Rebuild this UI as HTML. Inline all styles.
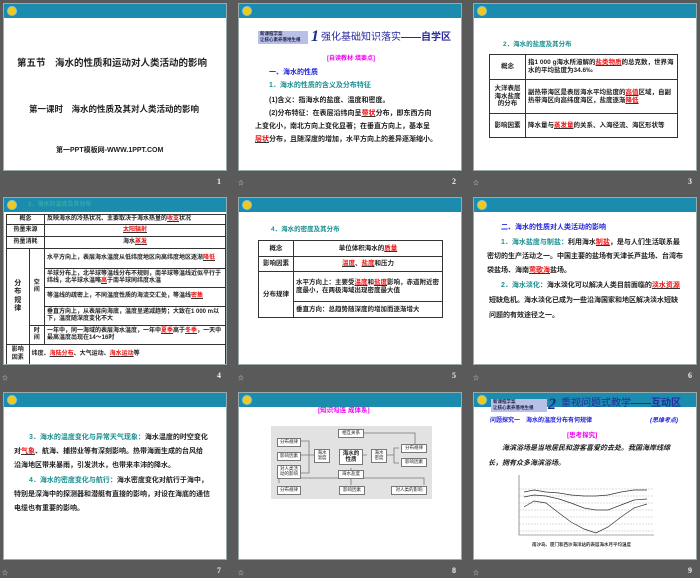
<!DOCTYPE html><html><head><meta charset="utf-8"><style>
*{margin:0;padding:0;box-sizing:border-box}
body{width:700px;height:578px;background:#5a5a5a;position:relative;overflow:hidden;font-family:"Liberation Sans","Noto Sans CJK SC",sans-serif;font-weight:bold;color:#222}
.s{position:absolute;width:224px;height:168px;background:#fff;border:1px solid #9aa;overflow:hidden}
.h{position:absolute;left:0;top:0;width:100%;height:14px;background:#1b8cae}
.sun{position:absolute;left:3px;top:2px;width:10px;height:10px;border-radius:50%;background:#f2c81a;border:1.5px solid #8cc6d8}
.n{position:absolute;color:#eee;font:bold 8px "Liberation Serif",serif}
.t{position:absolute;font-size:7px;white-space:nowrap;line-height:1}
.r{color:#e11;text-decoration:underline;text-decoration-color:#333}
.tl{color:#1a8f90}.bl{color:#2222dd}.mg{color:#e0e}
table{position:absolute;border-collapse:collapse;font-size:6.5px}
td{border:1px solid #333;padding:0 2px;line-height:1.2}
.bx{position:absolute;border:1px solid #777;background:#fff;font-size:4.5px;text-align:center;line-height:1.1;font-weight:normal;padding:1px}
.ic{position:absolute;left:2px;font-size:6px;color:#ccc}
</style></head><body>

<!-- slide 1 -->
<div class="s" style="left:3px;top:3px"><div class="h"><div class="sun"></div></div>
<div class="t" style="left:13px;top:55px;font-size:9.5px">第五节　海水的性质和运动对人类活动的影响</div>
<div class="t" style="left:25px;top:101px;font-size:8.5px">第一课时　海水的性质及其对人类活动的影响</div>
<div class="t" style="left:52px;top:143px;font-size:7px">第一PPT模板网-WWW.1PPT.COM</div>
</div>
<div class="n" style="left:217px;top:177px">1</div>

<!-- slide 2 -->
<div class="s" style="left:238px;top:3px"><div class="h"><div class="sun"></div></div>
<div style="position:absolute;left:19px;top:27px;width:50px;height:13px;background:#b8c0e8;font-size:4.5px;color:#224;line-height:6px;padding-left:2px">新课程学案<br>让核心素养落地生根</div>
<div class="t" style="left:72px;top:24px;font:italic bold 16px 'Liberation Serif',serif;color:#1a2a8a">1</div>
<div class="t" style="left:82px;top:29px;font-size:10px;color:#2a2aa0;font-weight:normal">强化基础知识落实<b>——自学区</b></div>
<div class="t mg" style="left:88px;top:52px;font-size:6px">[自读教材·填要点]</div>
<div class="t bl" style="left:30px;top:65px">一、海水的性质</div>
<div class="t tl" style="left:30px;top:78px">1．海水的性质的含义及分布特征</div>
<div class="t" style="left:30px;top:93px">(1)含义：指海水的盐度、温度和密度。</div>
<div class="t" style="left:30px;top:106px">(2)分布特征：在表层沿纬向呈<span class="r">带状</span>分布，即东西方向</div>
<div class="t" style="left:16px;top:119px">上变化小，南北方向上变化显著；在垂直方向上，基本呈</div>
<div class="t" style="left:16px;top:132px"><span class="r">层状</span>分布，且随深度的增加，水平方向上的差异逐渐缩小。</div>
</div>
<div class="n" style="left:452px;top:177px">2</div><div class="ic" style="left:238px;top:178px">☆</div>

<!-- slide 3 -->
<div class="s" style="left:473px;top:3px"><div class="h"><div class="sun"></div></div>
<div class="t tl" style="left:29px;top:38px;font-size:6.5px">2．海水的盐度及其分布</div>
<table style="left:15px;top:50px;width:189px"><tr style="height:25px"><td style="width:36px;text-align:center">概念</td><td>指1 000 g海水所溶解的<span class="r">盐类物质</span>的总克数，世界海水的平均盐度为34.6‰</td></tr>
<tr style="height:34px"><td style="text-align:center">大洋表层海水盐度的分布</td><td>副热带海区是表层海水平均盐度的<span class="r">高值</span>区域，自副热带海区向高纬度海区，盐度逐渐<span class="r">降低</span></td></tr>
<tr style="height:24px"><td style="text-align:center">影响因素</td><td>降水量与<span class="r">蒸发量</span>的关系、入海径流、海区形状等</td></tr></table>
</div>
<div class="n" style="left:688px;top:177px">3</div><div class="ic" style="left:473px;top:178px">☆</div>

<!-- slide 4 -->
<div class="s" style="left:3px;top:197px"><div class="h"><div class="sun"></div><div class="t" style="left:24px;top:4px;color:#3aa;font-size:6px">3．海水的温度及其分布</div></div>
<table style="left:2px;top:16px;width:220px;font-size:6px">
<tr style="height:10px"><td colspan="2" style="text-align:center;width:38px">概念</td><td>反映海水的冷热状况、主要取决于海水热量的<span class="r">收支</span>状况</td></tr>
<tr style="height:12px"><td colspan="2" style="text-align:center">热量来源</td><td style="text-align:center"><span class="r">太阳辐射</span></td></tr>
<tr style="height:12px"><td colspan="2" style="text-align:center">热量消耗</td><td style="text-align:center">海水<span class="r">蒸发</span></td></tr>
<tr style="height:20px"><td rowspan="5" style="text-align:center;width:22px;font-size:7px">分<br>布<br>规<br>律</td><td rowspan="4" style="text-align:center;width:15px">空<br>间</td><td>水平方向上，表层海水温度从低纬度地区向高纬度地区逐渐<span class="r">降低</span></td></tr>
<tr style="height:19px"><td>半球分布上，北半球等温线分布不规则，南半球等温线近似平行于纬线，北半球水温略<span class="r">高</span>于南半球同纬度水温</td></tr>
<tr style="height:19px"><td>等温线的疏密上，不同温度性质的海流交汇处，等温线<span class="r">密集</span></td></tr>
<tr style="height:19px"><td>垂直方向上，从表层向海底，温度呈递减趋势；大致在1 000 m以下，温度随深度变化不大</td></tr>
<tr style="height:19px"><td style="text-align:center">时<br>间</td><td>一年中，同一海域的表层海水温度，一年中<span class="r">夏季</span>高于<span class="r">冬季</span>，一天中最高温度出现在14～16时</td></tr>
<tr style="height:20px"><td style="text-align:center">影响<br>因素</td><td colspan="2">纬度、<span class="r">海陆分布</span>、大气运动、<span class="r">海水运动</span>等</td></tr>
</table></div>
<div class="n" style="left:217px;top:371px">4</div><div class="ic" style="top:373px">☆</div>

<!-- slide 5 -->
<div class="s" style="left:238px;top:197px"><div class="h"><div class="sun"></div></div>
<div class="t tl" style="left:32px;top:29px;font-size:6.5px">4．海水的密度及其分布</div>
<table style="left:19px;top:42px;width:185px"><tr style="height:16px"><td style="width:35px;text-align:center">概念</td><td style="text-align:center">单位体积海水的<span class="r">质量</span></td></tr>
<tr style="height:15px"><td style="text-align:center">影响因素</td><td style="text-align:center"><span class="r">温度</span>、<span class="r">盐度</span>和压力</td></tr>
<tr style="height:30px"><td rowspan="2" style="text-align:center">分布规律</td><td>水平方向上：主要受<span class="r">温度</span>和<span class="r">盐度</span>影响，赤道附近密度最小，在两极海域出现密度最大值</td></tr>
<tr style="height:16px"><td>垂直方向：总趋势随深度的增加而逐渐增大</td></tr></table>
</div>
<div class="n" style="left:452px;top:371px">5</div><div class="ic" style="left:238px;top:373px">☆</div>

<!-- slide 6 -->
<div class="s" style="left:473px;top:197px"><div class="h"><div class="sun"></div></div>
<div class="t bl" style="left:27px;top:26px">二、海水的性质对人类活动的影响</div>
<div class="t" style="left:27px;top:41px"><span class="tl">1．海水盐度与制盐：</span>利用海水<span class="r">制盐</span>，是与人们生活联系最</div>
<div class="t" style="left:13px;top:55px">密切的生产活动之一。中国主要的盐场有天津长芦盐场、台湾布</div>
<div class="t" style="left:13px;top:69px">袋盐场、海南<span class="r">莺歌海</span>盐场。</div>
<div class="t" style="left:27px;top:84px"><span class="tl">2．海水淡化：</span>海水淡化可以解决人类目前面临的<span class="r">淡水资源</span></div>
<div class="t" style="left:15px;top:99px">短缺危机。海水淡化已成为一些沿海国家和地区解决淡水短缺</div>
<div class="t" style="left:15px;top:114px">问题的有效途径之一。</div>
</div>
<div class="n" style="left:688px;top:371px">6</div><div class="ic" style="left:473px;top:373px">☆</div>

<!-- slide 7 -->
<div class="s" style="left:3px;top:392px"><div class="h"><div class="sun"></div></div>
<div class="t" style="left:25px;top:41px"><span class="tl">3．海水的温度变化与异常天气现象：</span>海水温度的时空变化</div>
<div class="t" style="left:10px;top:55px">对<span class="r">气象</span>、航海、捕捞业等有深刻影响。热带海面生成的台风给</div>
<div class="t" style="left:10px;top:69px">沿海地区带来暴雨，引发洪水，也带来丰沛的降水。</div>
<div class="t" style="left:25px;top:84px"><span class="tl">4．海水的密度变化与航行：</span>海水密度变化对航行于海中，</div>
<div class="t" style="left:10px;top:98px">特别是深海中的探测器和潜艇有直接的影响，对设在海底的通信</div>
<div class="t" style="left:10px;top:112px">电缆也有重要的影响。</div>
</div>
<div class="n" style="left:217px;top:566px">7</div><div class="ic" style="top:568px">☆</div>

<!-- slide 8 -->
<div class="s" style="left:238px;top:392px"><div class="h"><div class="sun"></div></div>
<div class="t mg" style="left:79px;top:15px;font-size:6.5px">[知识勾连 成体系]</div>
<div style="position:absolute;left:32px;top:33px;width:161px;height:73px;background:#e2e2e2"></div>
<svg style="position:absolute;left:0;top:0" width="224" height="168"><g stroke="#777" fill="none" stroke-width="0.8"><path d="M60 48H70V80H60M60 62H75M112 40V45M112 62H128M148 62H155V55H160M155 62V70H160M112 75V85M40 90V85H185V92M112 85V92M102 40H176V52"/></g></svg>
<div class="bx" style="left:38px;top:45px;width:24px">分布规律</div>
<div class="bx" style="left:38px;top:59px;width:24px">影响因素</div>
<div class="bx" style="left:38px;top:72px;width:24px">对人类活<br>动的影响</div>
<div class="bx" style="left:75px;top:56px;width:16px">海水<br>温度</div>
<div class="bx" style="left:100px;top:56px;width:24px;font-size:5.5px;font-weight:bold">海水的<br>性质</div>
<div class="bx" style="left:132px;top:56px;width:16px">海水<br>密度</div>
<div class="bx" style="left:99px;top:36px;width:26px">相互关系</div>
<div class="bx" style="left:99px;top:77px;width:26px">海水盐度</div>
<div class="bx" style="left:162px;top:51px;width:26px">分布规律</div>
<div class="bx" style="left:162px;top:65px;width:26px">影响因素</div>
<div class="bx" style="left:38px;top:93px;width:24px">分布规律</div>
<div class="bx" style="left:100px;top:93px;width:26px">影响因素</div>
<div class="bx" style="left:152px;top:93px;width:36px">对人类的影响</div>
</div>
<div class="n" style="left:452px;top:566px">8</div><div class="ic" style="left:238px;top:568px">☆</div>

<!-- slide 9 -->
<div class="s" style="left:473px;top:392px"><div class="h"><div class="sun"></div></div>
<div style="position:absolute;left:17px;top:6px;width:56px;height:13px;background:#b8c0e8;font-size:4.5px;color:#224;line-height:6px;padding-left:2px">新课程学案<br>让核心素养落地生根</div>
<div class="t" style="left:74px;top:3px;font:italic bold 16px 'Liberation Serif',serif;color:#1a2a8a">2</div>
<div class="t" style="left:87px;top:6px;font-size:10px;color:#2a2aa0;font-weight:normal">重视问题式教学<b>——互动区</b></div>
<div class="t bl" style="left:16px;top:25px;font-size:6px">问题探究一　海水的温度分布有何规律</div>
<div class="t bl" style="left:176px;top:25px;font-size:6px;font-style:italic">(思维考点)</div>
<div class="t mg" style="left:93px;top:40px;font-size:6.5px">[思考探究]</div>
<div class="t" style="left:28px;top:52px;font-size:7px;font-style:italic">海滨浴场是当地居民和游客喜爱的去处。我国海岸线绵</div>
<div class="t" style="left:14px;top:67px;font-size:7px;font-style:italic">长，拥有众多海滨浴场。</div>
<svg style="position:absolute;left:0;top:0" width="224" height="168"><g stroke="#aaa" stroke-dasharray="2 1" stroke-width="0.4"><path d="M45 96H180M45 103H180M45 110H180M45 117H180M45 124H180M45 131H180M45 138H180"/></g><path d="M45 82V142H180" stroke="#555" fill="none" stroke-width="0.6"/><g fill="none" stroke="#333" stroke-width="0.7"><path d="M50 99L60 97L72 99L85 100L97 102L110 103L122 103L134 102L147 99L160 97L173 97"/><path d="M50 104L60 102L72 103L85 106L97 110L110 115L122 117L134 117L147 112L160 107L173 106"/><path d="M50 114L60 108L72 110L85 120L97 129L110 136L122 140L134 134L147 124L160 115L173 111"/></g><text x="58" y="153" font-size="4.5" fill="#333">南沙岛、厦门和西沙海洋站的表层海水月平均温度</text></svg>
</div>
<div class="n" style="left:688px;top:566px">9</div><div class="ic" style="left:473px;top:568px">☆</div>
</body></html>
